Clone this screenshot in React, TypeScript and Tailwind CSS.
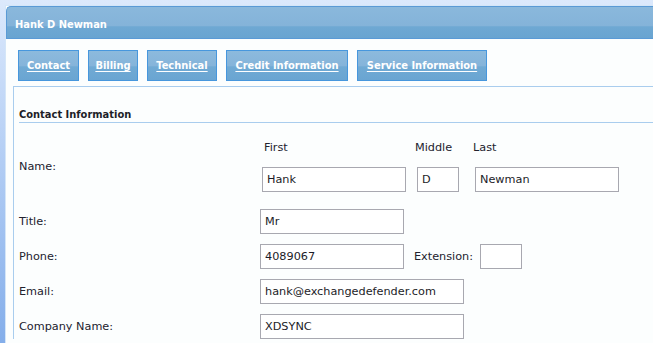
const tabs = [
  { label: 'Contact', w: 'w-[61px]' },
  { label: 'Billing', w: 'w-[50px]' },
  { label: 'Technical', w: 'w-[70px]' },
  { label: 'Credit Information', w: 'w-[122px]' },
  { label: 'Service Information', w: 'w-[130px]' },
]

const boldFont = "font-['DejaVu_Sans_Condensed','DejaVu_Sans',sans-serif] font-bold"

function Field({ value, w }: { value: string; w: string }) {
  return (
    <input
      readOnly
      defaultValue={value}
      className={`${w} h-[25px] border border-[#a8a8b0] bg-white pl-[4px] text-[11.25px] text-[#1c1c28] outline-none`}
    />
  )
}

function Row({ label, children }: { label: string; children: React.ReactNode }) {
  return (
    <div className="flex items-center">
      <div className="w-[241px] shrink-0 leading-[13px]">{label}</div>
      {children}
    </div>
  )
}

export default function App() {
  return (
    <div className="h-screen w-full overflow-hidden bg-gradient-to-b from-[#dce9fc] to-[#84aeea] pt-[5px] pl-[5px] font-['DejaVu_Sans',sans-serif] text-[11.25px] text-[#22222e]">
      <div className="h-full border-t border-l border-[#d4e6f8] bg-[#fcfefe]">
        {/* Header */}
        <div className="h-[33px] rounded-tl-[5px] border-y border-l border-[#5a9ad6] bg-[linear-gradient(to_bottom,#8ab8dc_0%,#84b3d9_60%,#6ea8d3_64%,#69a4d1_100%)] pl-[8px] pt-[10px]">
          <span className={`${boldFont} text-[11px] leading-[13px] text-white`}>Hank D Newman</span>
        </div>

        {/* Tabs */}
        <div className="flex gap-[9px] pl-[12px] pt-[11px]">
          {tabs.map((t) => (
            <button
              key={t.label}
              className={`${t.w} h-[31px] border border-[#4797dd] bg-[linear-gradient(to_bottom,#8cbadd_0%,#85b4da_50%,#70aad4_55%,#6aa5d2_100%)] pt-[2px] ${boldFont} text-[11px] text-white underline underline-offset-[2px]`}
            >
              {t.label}
            </button>
          ))}
        </div>

        {/* Contact box */}
        <div className="ml-[7px] mt-[5px] border-t border-l border-[#a9cdee] pl-[5px] pt-[21px]">
          <div className={`${boldFont} border-b border-[#a9cdee] pb-[1px] text-[11px] leading-[13px] text-[#1e1e28]`}>
            Contact Information
          </div>

          <div className="flex flex-col pt-[18px]">
            <Row label="Name:">
              <div className="ml-[2px] flex">
                <div className="w-[153px]">
                  <div className="ml-[2px] leading-[13px]">First</div>
                  <div className="mt-[13px]"><Field value="Hank" w="w-[144px]" /></div>
                </div>
                <div className="w-[58px]">
                  <div className="leading-[13px]">Middle</div>
                  <div className="ml-[2px] mt-[13px]"><Field value="D" w="w-[42px]" /></div>
                </div>
                <div>
                  <div className="leading-[13px]">Last</div>
                  <div className="ml-[2px] mt-[13px]"><Field value="Newman" w="w-[144px]" /></div>
                </div>
              </div>
            </Row>

            <div className="mt-[17px] flex flex-col gap-[10px]">
              <Row label="Title:">
                <Field value="Mr" w="w-[144px]" />
              </Row>
              <Row label="Phone:">
                <Field value="4089067" w="w-[144px]" />
                <span className="ml-[10px] w-[66px] leading-[13px]">Extension:</span>
                <Field value="" w="w-[42px]" />
              </Row>
              <Row label="Email:">
                <Field value="hank@exchangedefender.com" w="w-[204px]" />
              </Row>
              <Row label="Company Name:">
                <Field value="XDSYNC" w="w-[204px]" />
              </Row>
            </div>
          </div>
        </div>
      </div>
    </div>
  )
}
